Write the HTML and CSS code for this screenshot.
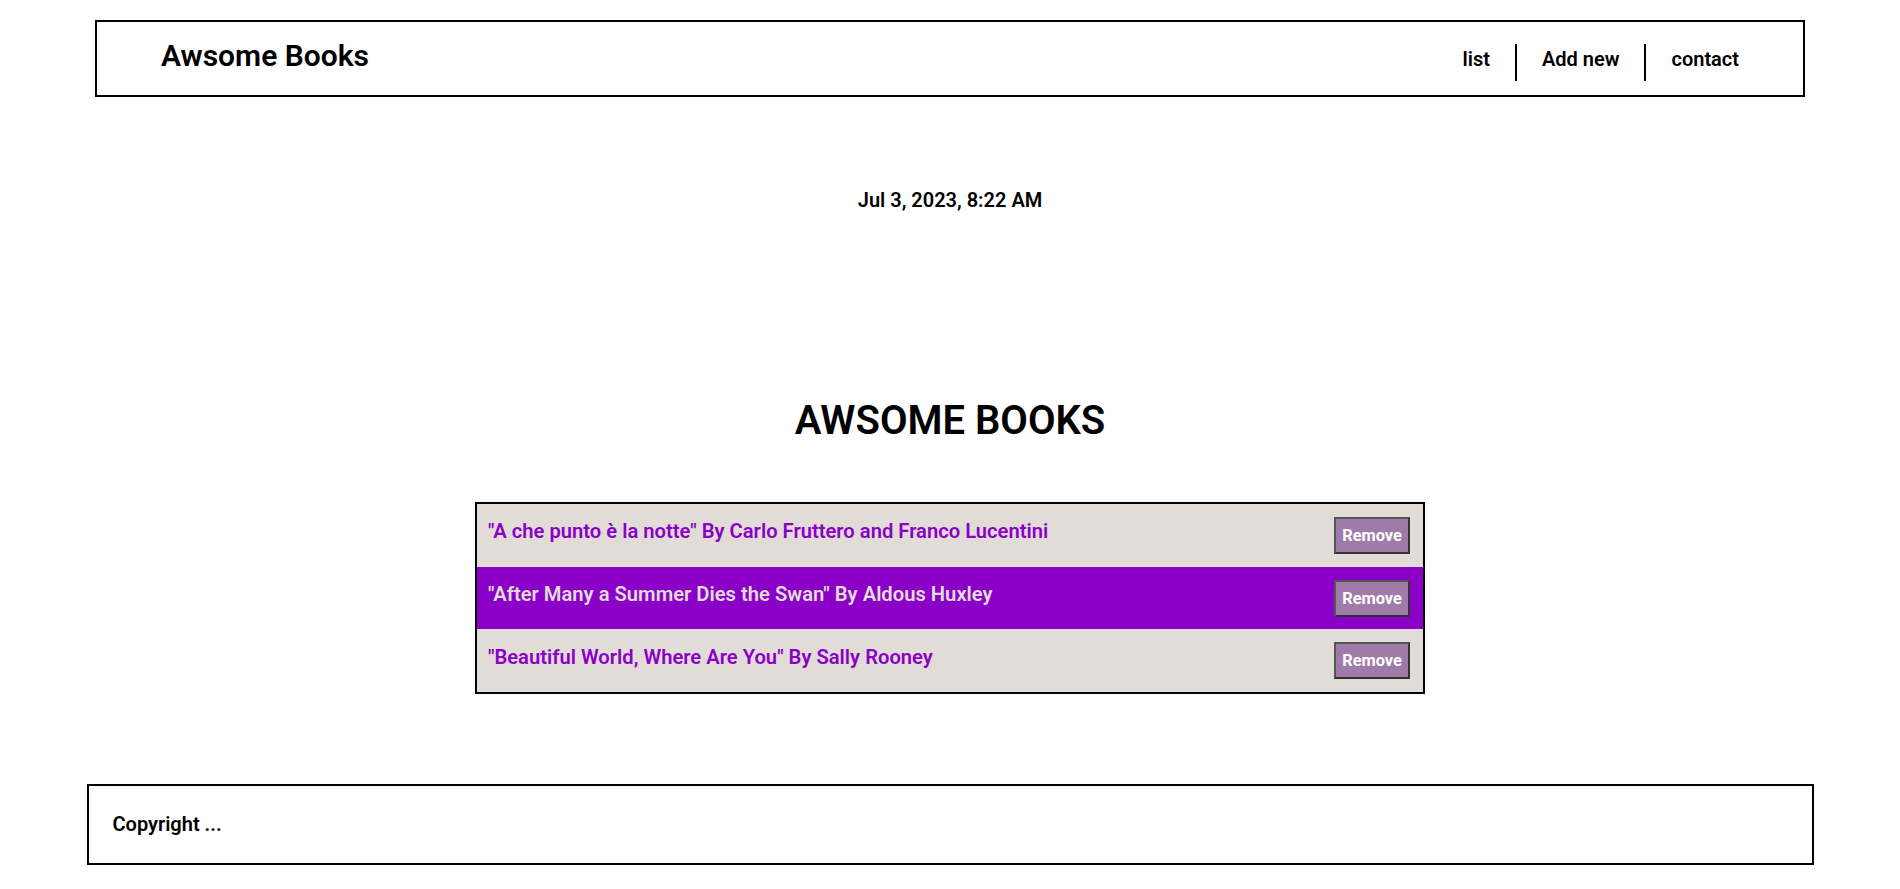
FILE: index.html
```html
<!DOCTYPE html>
<html lang="en">
<head>
<meta charset="utf-8">
<title>Awsome Books</title>
<link rel="stylesheet" href="styles.css">
</head>
<body>
<header class="topbar">
  <h1 class="brand">Awsome Books</h1>
  <nav class="nav">
    <a class="nav-link" href="#">list</a>
    <a class="nav-link nav-sep" href="#">Add new</a>
    <a class="nav-link nav-sep" href="#">contact</a>
  </nav>
</header>
<main class="main">
  <p class="date">Jul 3, 2023, 8:22 AM</p>
  <h2 class="heading">AWSOME BOOKS</h2>
  <ul class="books">
    <li class="book">
      <p class="book-text">"A che punto è la notte" By Carlo Fruttero and Franco Lucentini</p>
      <button class="remove">Remove</button>
    </li>
    <li class="book book-alt">
      <p class="book-text">"After Many a Summer Dies the Swan" By Aldous Huxley</p>
      <button class="remove">Remove</button>
    </li>
    <li class="book">
      <p class="book-text">"Beautiful World, Where Are You" By Sally Rooney</p>
      <button class="remove">Remove</button>
    </li>
  </ul>
</main>
<footer class="footer">
  <p class="copyright">Copyright ...</p>
</footer>
</body>
</html>
```

FILE: styles.css
```css
* {
  box-sizing: border-box;
}

html,
body {
  margin: 0;
  padding: 0;
  background: #fff;
}

body {
  font-family: Roboto, "Liberation Sans", Arial, sans-serif;
  color: #000;
  padding-top: 20px;
}

.topbar {
  width: 1710px;
  height: 77px;
  margin: 0 auto;
  border: 2px solid #000;
  display: flex;
  align-items: center;
  justify-content: space-between;
  padding: 0 64px 0 64px;
}

.brand {
  margin: 0 0 6px 0;
  font-size: 30px;
  font-weight: 600;
  line-height: 1;
}

.nav {
  display: flex;
  align-items: center;
  margin-top: 8px;
}

.nav-link {
  color: #000;
  text-decoration: none;
  font-size: 20px;
  font-weight: 600;
  padding: 0 25px;
  height: 37px;
  line-height: 30px;
}

.nav-link:first-child {
  padding-left: 0;
}

.nav-link:last-child {
  padding-right: 0;
}

.nav-sep {
  border-left: 2px solid #000;
}

.main {
  display: flex;
  flex-direction: column;
  align-items: center;
}

.date {
  margin: 91px 0 0 0;
  font-size: 20px;
  font-weight: 600;
}

.heading {
  margin: 185px 0 0 0;
  font-size: 40px;
  font-weight: 600;
}

.books {
  list-style: none;
  margin: 58px 0 0 0;
  padding: 0;
  width: 950px;
  border: 2px solid #000;
}

.book {
  display: flex;
  align-items: center;
  justify-content: space-between;
  height: 62.7px;
  padding: 0 13px 0 11px;
  background: #e2dcd6;
  color: #8a00c9;
}

.book-alt {
  background: #8a00c9;
  color: #e2dcd6;
}

.book-text {
  margin: 0;
  padding-bottom: 8px;
  font-size: 20.2px;
  font-weight: 600;
}

.remove {
  font-family: Roboto, "Liberation Sans", Arial, sans-serif;
  font-size: 16.4px;
  font-weight: 700;
  color: #fff;
  background: #9f7ba9;
  border: 2px solid;
  border-color: #555 #333 #333 #555;
  width: 76px;
  height: 37px;
  padding: 0;
  cursor: pointer;
}

.footer {
  width: 1727px;
  margin: 90px auto 0 auto;
  border: 2px solid #000;
  padding: 27px 24px;
}

.copyright {
  margin: 0;
  font-size: 20px;
  font-weight: 600;
  line-height: 23px;
}
```
